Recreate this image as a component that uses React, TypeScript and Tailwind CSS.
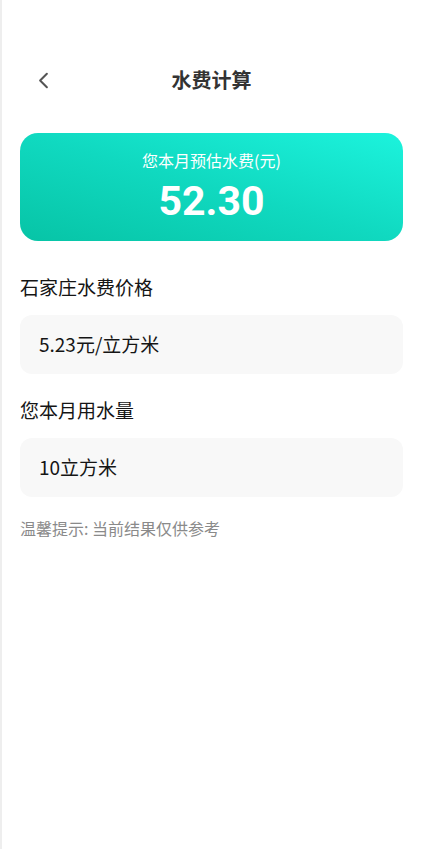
import { ChevronLeft } from 'lucide-react';

const font = { fontFamily: '"Noto Sans CJK SC", "Noto Sans", sans-serif' };

function Field({ label, value, top }: { label: string; value: string; top: string }) {
  return (
    <div className={top}>
      <p className="text-[19px] leading-[28px] text-[#151515]">{label}</p>
      <div className="mt-[14px] flex h-[59px] items-center rounded-[12px] bg-[#f8f8f8] px-[19px]">
        <span className="text-[19px] text-[#151515]">{value}</span>
      </div>
    </div>
  );
}

export default function App() {
  return (
    <div className="min-h-[849px] w-[421px] border-l-2 border-[#eeeeee] bg-white" style={font}>
      <div className="pt-[60px] px-[18px]">
        <header className="relative flex h-[40px] items-center justify-center">
          <ChevronLeft className="absolute left-[10px] h-[27px] w-[27px] text-[#555]" strokeWidth={1.8} />
          <h1 className="text-[20px] font-bold text-[#333]">水费计算</h1>
        </header>

        <div className="mt-[33px] flex h-[108px] flex-col items-center justify-center rounded-[18px] bg-gradient-to-tr from-[#07c4a6] via-[#10d9c0] to-[#1cf3dd] text-white">
          <p className="text-[16px] leading-[22px]">您本月预估水费(元)</p>
          <p
            className="mt-[6px] text-[41px] leading-[48px] font-bold"
            style={{ fontFamily: 'Roboto, "Noto Sans", sans-serif' }}
          >
            52.30
          </p>
        </div>

        <Field top="mt-[32px]" label="石家庄水费价格" value="5.23元/立方米" />
        <Field top="mt-[22px]" label="您本月用水量" value="10立方米" />

        <p className="mt-[20px] text-[16px] leading-[22px] text-[#8a8a8a]">温馨提示: 当前结果仅供参考</p>
      </div>
    </div>
  );
}
